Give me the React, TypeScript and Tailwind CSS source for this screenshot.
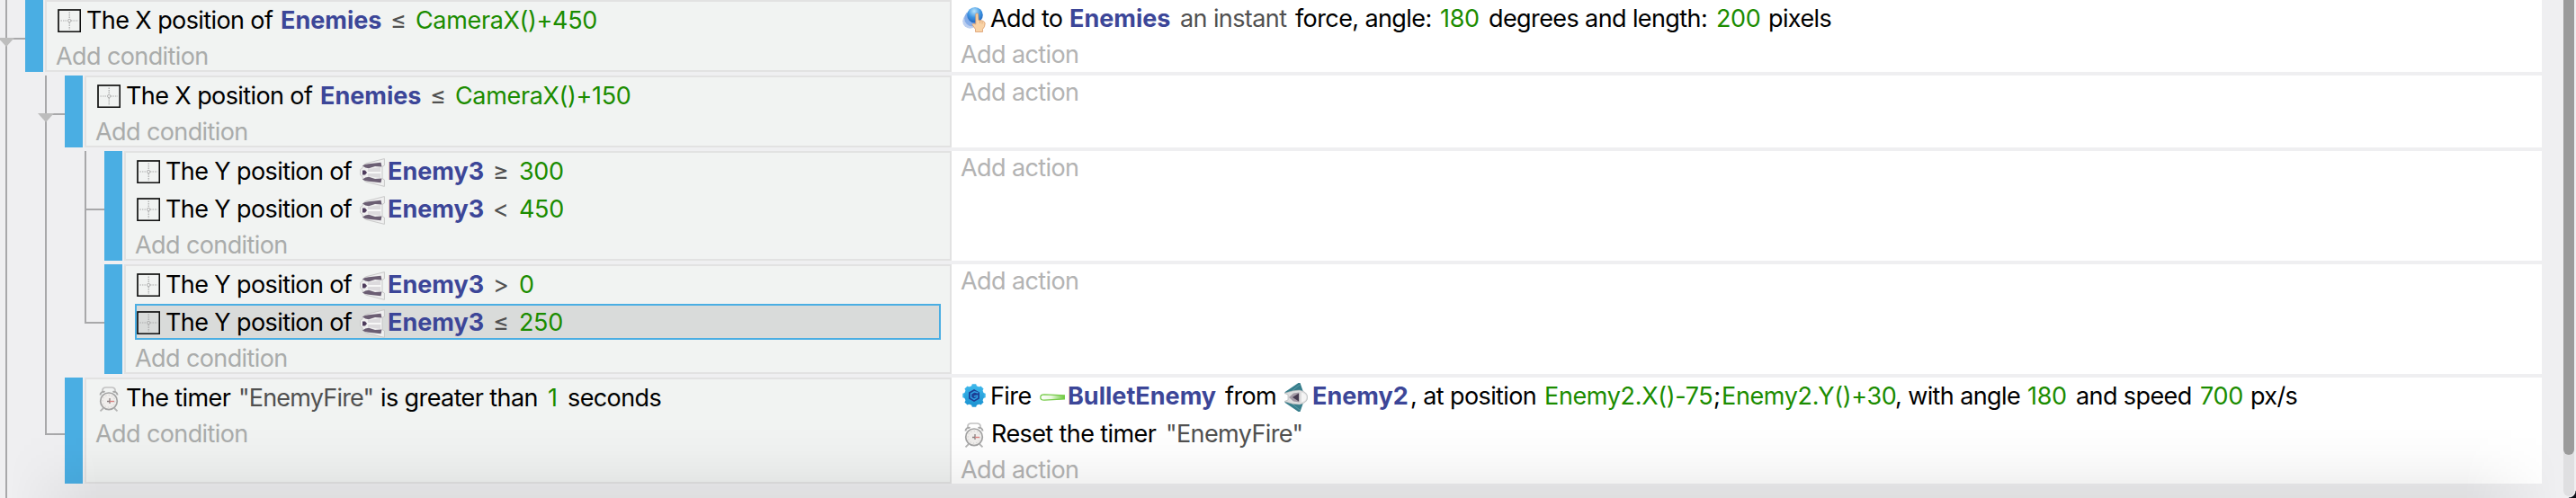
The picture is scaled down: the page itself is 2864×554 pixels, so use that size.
import React, { ReactNode } from "react";

const BLACK = "text-black tracking-[-0.6px]";
const OBJECT = "font-bold text-[#3c4698] tracking-[0px]";
const NUMBER = "text-[#1b8c00] tracking-[-0.35px]";
const STRING = "text-[#505050] tracking-[-0.6px]";

function T({ k, w, children }: { k: string; w: string; children: ReactNode }) {
  return <span className={`block shrink-0 ${k} ${w}`}>{children}</span>;
}

function PositionIcon() {
  return (
    <svg className="mt-[6px] mr-[6px] block shrink-0" width="26" height="26" viewBox="0 0 26 26" fill="none">
      <rect x="1" y="1" width="24.3" height="24.3" stroke="#111" strokeWidth="1.7" />
      <path d="M3.5 13H11M15 13h8" stroke="#a9a9a9" strokeWidth="1.2" strokeDasharray="1.4 1.1" />
      <path d="M13.2 3.5V11M13.2 15v8" stroke="#a9a9a9" strokeWidth="1.2" strokeDasharray="1.4 1.1" />
      <circle cx="13.2" cy="13" r="1.7" stroke="#a9a9a9" strokeWidth="0.9" />
    </svg>
  );
}

function TimerIcon() {
  return (
    <svg className="mt-[6px] mr-[6px] block shrink-0" width="26" height="28" viewBox="0 0 26 28" fill="none">
      <path d="M6.5 7C4.5 2 8 1 10 1h6c2 0 5.500 1 3.500 6" stroke="#c2c2c2" strokeWidth="1.6" />
      <path d="M3.500 9.500c0-3 3-4.500 5-3.500M22.500 9.500c0-3-3-4.500-5-3.500" stroke="#a8a8a8" strokeWidth="2" />
      <path d="M7 24l-3.500 3.300M19 24l3.500 3.300" stroke="#b5b5b5" strokeWidth="1.8" />
      <circle cx="13" cy="16.300" r="9.300" fill="#f0eeec" stroke="#a3a3a3" strokeWidth="1.700" />
      <circle cx="13" cy="16.300" r="6.800" stroke="#cfcfcf" strokeWidth="1" strokeDasharray="1.300 2.200" />
      <path d="M14 13v6M11 16.500h3" stroke="#8a8080" strokeWidth="1.300" />
      <path d="M14 16.500h5" stroke="#d98282" strokeWidth="1.400" />
    </svg>
  );
}

function Enemy3Icon() {
  return (
    <svg className="mt-1 block shrink-0" width="28" height="32" viewBox="0 0 28 32" fill="none">
      <path d="M27.400 .6L8 5.500Q3 7 3 11L.6 12.500v6L3 20.500Q3 25 8 26.500L27.400 31.400V24L25 22.500v-13L27.400 8z" fill="#f0f0f0" stroke="#c4c4c4" strokeWidth=".9" />
      <path d="M9 12L23 10v12L9 20z" fill="#dcdadd" />
      <path d="M9 15h15v2H9z" fill="#f7f7f7" />
      <path d="M3 8.500Q5 6.800 10 6.200L23.500 4.800L24.500 9.500L17 9L10 11.300Q6 11 3 8.500z" fill="#6b5e73" />
      <path d="M3 23.500Q5 25.200 10 25.800L23.500 27.200L24.500 22.500L17 23L10 20.700Q6 21 3 23.500z" fill="#6b5e73" />
      <path d="M3 13.500h3l2 2.500-2 2.500H3z" fill="#4e3c5c" />
    </svg>
  );
}

function Enemy2Icon() {
  return (
    <svg className="mt-1 block shrink-0" width="26" height="32" viewBox="0 0 26 32" fill="none">
      <path d="M0 10.500L15.500 0H17.500L20.500 8.500V23.500L17.500 32H15.500L0 21.500L6 20V12z" fill="#377e8c" />
      <path d="M9 8.500L17 2M9 23.500L17 30" stroke="#5b9ba7" strokeWidth="1" />
      <path d="M0 11.500Q9 8 17 8Q25.700 10 25.700 16T17 24Q9 24 0 20.500L4 19V13z" fill="#dededf" stroke="#a9b0b2" strokeWidth=".6" />
      <path d="M19 10.500Q24.500 12 24.500 16T19 21.500z" fill="#f5f5f5" />
      <path d="M5 16L10 11.500L16.500 10.500V21.500L10 20.500z" fill="#a49aa6" />
      <path d="M9 16L16 11.500V20.500z" fill="#463a50" />
    </svg>
  );
}

function BulletIcon() {
  return (
    <svg className="mt-4 block shrink-0" width="28" height="8" viewBox="0 0 28 8" fill="none">
      <defs>
        <linearGradient id="bullet" x1="0" x2="1">
          <stop offset="0" stopColor="#fff" />
          <stop offset=".45" stopColor="#eaf8e0" />
          <stop offset="1" stopColor="#6cc93c" />
        </linearGradient>
      </defs>
      <path d="M27.500 1.800L5 .8Q.8 .8 .8 4T5 7.200L27.500 6z" fill="url(#bullet)" stroke="#77cc4b" strokeWidth="1.300" />
    </svg>
  );
}

const TEETH = [0, 45, 90, 135, 180, 225, 270, 315];

function GearIcon() {
  return (
    <svg className="mt-[5px] mr-[5px] block shrink-0" width="26" height="26" viewBox="0 0 26 26" fill="none">
      <defs>
        <linearGradient id="gear" x1="0" y1="0" x2="0" y2="1">
          <stop offset="0" stopColor="#3cb7ea" />
          <stop offset="1" stopColor="#1c93d2" />
        </linearGradient>
      </defs>
      {TEETH.map((a) => (
        <path key={a} d="M9.800 3.500L10.800 .3h4.400l1 3.200z" fill={a < 100 || a > 260 ? "#3cb4e8" : "#2199d6"} transform={`rotate(${a} 13 13)`} />
      ))}
      <circle cx="13" cy="13" r="10.900" fill="url(#gear)" />
      <path d="M13 6L19 9.400V16.600L13 20L7 16.600V9.400z" fill="#1c3d94" />
      <path d="M17.500 10L13.200 8.800L9.500 11V15.200L13 17.300L16.500 15.200V13.200L12.800 14" stroke="#2f9fe0" strokeWidth="1.500" />
    </svg>
  );
}

function ForceIcon() {
  return (
    <svg className="mt-[5px] mr-[5px] block shrink-0" width="26" height="29" viewBox="0 0 26 29" fill="none">
      <defs>
        <radialGradient id="ball" cx=".45" cy=".25" r=".8">
          <stop offset="0" stopColor="#b9e4fb" />
          <stop offset=".5" stopColor="#3f95e2" />
          <stop offset="1" stopColor="#1b5cb8" />
        </radialGradient>
      </defs>
      <circle cx="8.500" cy="16.500" r="8.300" fill="#bccff0" />
      <circle cx="11" cy="13.500" r="8.800" fill="#86ade8" />
      <circle cx="14" cy="9.800" r="8.800" fill="url(#ball)" />
      <path d="M14.800 8.500Q16.200 7 17.500 8.500L18 15.500Q24.500 15.500 25.200 19Q25.200 23 22.500 25.500V28.500H14.500V25.500L11 20.500Q11.500 18.300 14.800 20z" fill="#f9d3a6" stroke="#d99b6c" strokeWidth=".8" />
      <path d="M19.500 16v3M22 16.500v3" stroke="#e0a878" strokeWidth=".8" />
    </svg>
  );
}

function Line({ selected, children }: { selected?: boolean; children: ReactNode }) {
  return (
    <div className={`mb-0.5 flex h-10 items-start border-2 ${selected ? "border-[#4aaee3] bg-[#d9dbda]" : "border-transparent"}`}>
      {children}
    </div>
  );
}

function Conditions({ w, children }: { w: string; children: ReactNode }) {
  return (
    <div className={`ml-0.5 shrink-0 border-2 border-[#e2e2e2] bg-[#f1f3f2] px-2.5 ${w}`}>
      {children}
      <div className="h-[34px] leading-[38px] tracking-[-0.6px] text-[#aaacab]">Add condition</div>
    </div>
  );
}

function Actions({ children }: { children?: ReactNode }) {
  return (
    <div className="w-[1768px] shrink-0 bg-white px-2.5">
      {children}
      <div className="h-[34px] leading-[38px] tracking-[-0.6px] text-[#b3b3b3]">Add action</div>
    </div>
  );
}

function Rail() {
  return <div className="-mb-1 w-11 shrink-0 border-l-2 border-[#a8a8aa]" />;
}

const ELBOWS = {
  open: "h-11",
  middle: "h-[66px]",
  last: "h-16 border-l-2",
  lastTall: "h-[66px] border-l-2",
};

function Elbow({ kind }: { kind: keyof typeof ELBOWS }) {
  const continues = kind === "open" || kind === "middle";
  return (
    <div className={`w-[22px] shrink-0 ${continues ? "-mb-1 border-l-2 border-[#a8a8aa]" : ""}`}>
      <div className={`border-b-2 border-[#a8a8aa] ${ELBOWS[kind]}`} />
      {kind === "open" && (
        <svg className="relative -top-0.5 -left-[11px] block" width="20" height="10" viewBox="0 0 20 10">
          <path d="M1 0h18L10 10z" fill="#bdbdbd" />
        </svg>
      )}
    </div>
  );
}

const Bar = () => <div className="w-5 shrink-0 bg-[#4aaee3]" />;

const Row = ({ children }: { children: ReactNode }) => <div className="flex items-stretch">{children}</div>;

function YCondition({ op, value, selected }: { op: string; value: string; selected?: boolean }) {
  return (
    <Line selected={selected}>
      <PositionIcon />
      <T k={BLACK} w="w-[216px]">The Y position of</T>
      <Enemy3Icon />
      <T k={OBJECT} w="w-[120px] pl-[3px]">Enemy3</T>
      <T k={STRING} w="w-[29px]">{op}</T>
      <T k={NUMBER} w="w-[60px]">{value}</T>
    </Line>
  );
}

export default function App() {
  return (
    <div className="relative flex h-[554px] w-[2864px] overflow-hidden bg-[#efeff1] font-['Inter',sans-serif] text-[27px] leading-[37px] whitespace-pre">
      <div className="flex w-[2850px] shrink-0 flex-col gap-1 pl-1.5">
        <Row>
          <Elbow kind="open" />
          <Bar />
          <Conditions w="w-[1008px]">
            <Line>
              <PositionIcon />
              <T k={BLACK} w="w-[216px]">The X position of</T>
              <T k={OBJECT} w="w-[122px]">Enemies</T>
              <T k={STRING} w="w-[28px]">≤</T>
              <T k={NUMBER} w="w-[210px]">CameraX()+450</T>
            </Line>
          </Conditions>
          <Actions>
            <Line>
              <ForceIcon />
              <T k={BLACK} w="w-[88px]">Add to</T>
              <T k={OBJECT} w="w-[123px]">Enemies</T>
              <T k={STRING} w="w-[128px]">an instant</T>
              <T k={BLACK} w="w-[161px]">force, angle:</T>
              <T k={NUMBER} w="w-[54px]">180</T>
              <T k={BLACK} w="w-[253px]">degrees and length:</T>
              <T k={NUMBER} w="w-[58px]">200</T>
              <T k={BLACK} w="w-[80px]">pixels</T>
            </Line>
          </Actions>
        </Row>

        <Row>
          <Rail />
          <Elbow kind="open" />
          <Bar />
          <Conditions w="w-[964px]">
            <Line>
              <PositionIcon />
              <T k={BLACK} w="w-[216px]">The X position of</T>
              <T k={OBJECT} w="w-[122px]">Enemies</T>
              <T k={STRING} w="w-[28px]">≤</T>
              <T k={NUMBER} w="w-[210px]">CameraX()+150</T>
            </Line>
          </Conditions>
          <Actions />
        </Row>

        <Row>
          <Rail />
          <Rail />
          <Elbow kind="middle" />
          <Bar />
          <Conditions w="w-[920px]">
            <YCondition op="≥" value="300" />
            <YCondition op="<" value="450" />
          </Conditions>
          <Actions />
        </Row>

        <Row>
          <Rail />
          <Rail />
          <Elbow kind="lastTall" />
          <Bar />
          <Conditions w="w-[920px]">
            <YCondition op=">" value="0" />
            <YCondition op="≤" value="250" selected />
          </Conditions>
          <Actions />
        </Row>

        <Row>
          <Rail />
          <Elbow kind="last" />
          <Bar />
          <Conditions w="w-[964px]">
            <Line>
              <TimerIcon />
              <T k={BLACK} w="w-[125px]">The timer</T>
              <T k={STRING} w="w-[158px] tracking-[-0.8px]">"EnemyFire"</T>
              <T k={BLACK} w="w-[186px]">is greater than</T>
              <T k={NUMBER} w="w-[22px]">1</T>
              <T k={BLACK} w="w-[120px]">seconds</T>
            </Line>
          </Conditions>
          <Actions>
            <Line>
              <GearIcon />
              <T k={BLACK} w="w-[55px]">Fire</T>
              <BulletIcon />
              <T k={OBJECT} w="w-[178px] pl-[3px]">BulletEnemy</T>
              <T k={BLACK} w="w-[66px]">from</T>
              <Enemy2Icon />
              <T k={OBJECT} w="w-[114px] pl-[5px]">Enemy2</T>
              <T k={BLACK} w="w-[149px]">, at position</T>
              <T k={NUMBER} w="w-[188px]">Enemy2.X()-75</T>
              <T k={BLACK} w="w-[9px]">;</T>
              <T k={NUMBER} w="w-[193px]">Enemy2.Y()+30</T>
              <T k={BLACK} w="w-[147px]">, with angle</T>
              <T k={NUMBER} w="w-[54px]">180</T>
              <T k={BLACK} w="w-[138px]">and speed</T>
              <T k={NUMBER} w="w-[56px]">700</T>
              <T k={BLACK} w="w-[60px]">px/s</T>
            </Line>
            <Line>
              <TimerIcon />
              <T k={BLACK} w="w-[194px]">Reset the timer</T>
              <T k={STRING} w="w-[160px]">"EnemyFire"</T>
            </Line>
          </Actions>
        </Row>
        <div className="-mt-1 h-5 border-l-2 border-[#a8a8aa]" />
      </div>

      <div className="h-[552px] w-3 shrink-0 rounded-b-md bg-[#dfdfe1]">
        <div className="h-[506px] rounded-b-md bg-[#9b9b9b]" />
      </div>

      <div className="pointer-events-none absolute bottom-0 left-0 h-20 w-[2850px] bg-[linear-gradient(to_bottom,transparent,rgba(0,0,0,0.01)_32%,rgba(0,0,0,0.03)_58%,rgba(0,0,0,0.055)_80%,rgba(0,0,0,0.065))] [mask-image:linear-gradient(to_right,transparent_10px,black_110px,black_2740px,transparent_2845px)]" />
      <div className="absolute right-0 bottom-0 size-2 bg-[radial-gradient(circle_at_top_left,transparent_7px,#0b0f18_8px)]" />
    </div>
  );
}
